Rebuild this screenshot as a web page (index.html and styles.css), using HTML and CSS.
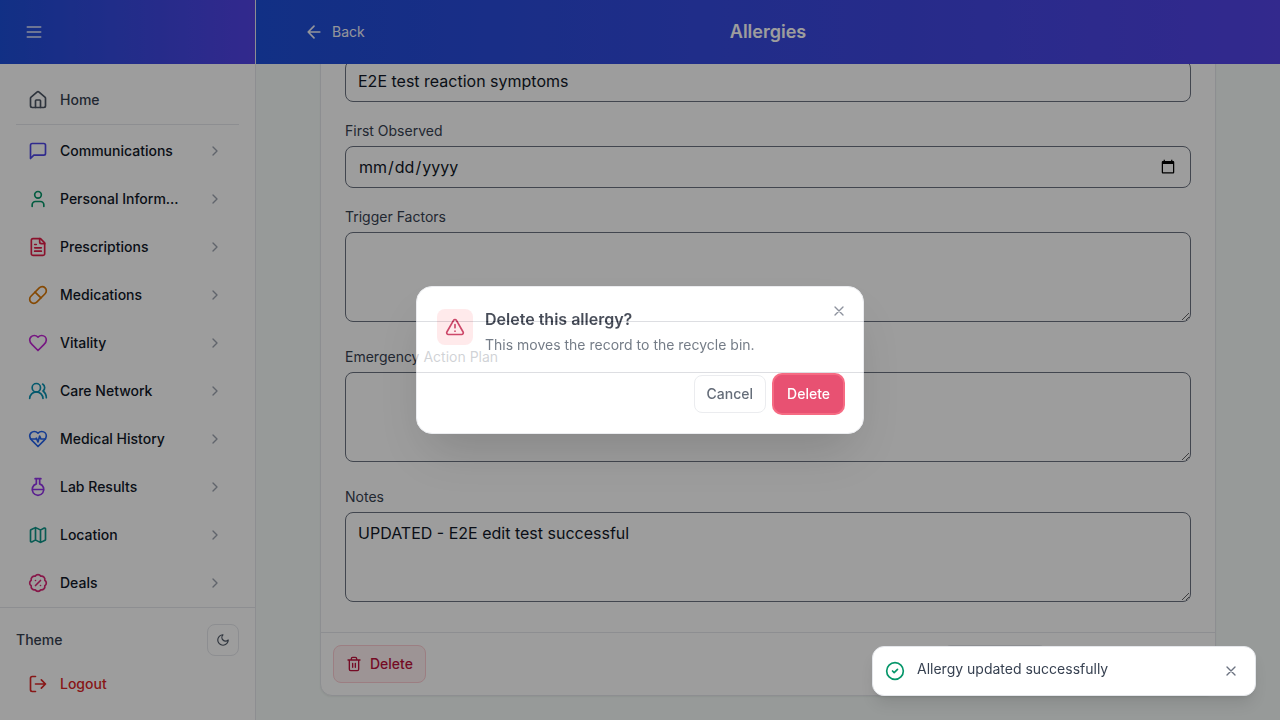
FILE: index.html
```html
<!DOCTYPE html>
<html lang="en">
<head>
<meta charset="utf-8">
<meta name="viewport" content="width=device-width, initial-scale=1">
<title>Allergies</title>
<link rel="stylesheet" href="styles.css">
</head>
<body>
<svg class="sprite" aria-hidden="true">
  <symbol id="menu" viewBox="0 0 24 24"><path d="M4 6h16M4 12h16M4 18h16"/></symbol>
  <symbol id="house" viewBox="0 0 24 24"><path d="M15 21v-8a1 1 0 0 0-1-1h-4a1 1 0 0 0-1 1v8"/><path d="M3 10a2 2 0 0 1 .709-1.528l7-6a2 2 0 0 1 2.582 0l7 6A2 2 0 0 1 21 10v9a2 2 0 0 1-2 2H5a2 2 0 0 1-2-2z"/></symbol>
  <symbol id="message" viewBox="0 0 24 24"><path d="M21 15a2 2 0 0 1-2 2H7l-4 4V5a2 2 0 0 1 2-2h14a2 2 0 0 1 2 2z"/></symbol>
  <symbol id="user" viewBox="0 0 24 24"><path d="M19 21v-2a4 4 0 0 0-4-4H9a4 4 0 0 0-4 4v2"/><circle cx="12" cy="7" r="4"/></symbol>
  <symbol id="file" viewBox="0 0 24 24"><path d="M15 2H6a2 2 0 0 0-2 2v16a2 2 0 0 0 2 2h12a2 2 0 0 0 2-2V7Z"/><path d="M14 2v4a2 2 0 0 0 2 2h4M10 9H8M16 13H8M16 17H8"/></symbol>
  <symbol id="pill" viewBox="0 0 24 24"><path d="m10.5 20.5 10-10a4.95 4.95 0 1 0-7-7l-10 10a4.95 4.95 0 1 0 7 7Z"/><path d="m8.5 8.5 7 7"/></symbol>
  <symbol id="heart" viewBox="0 0 24 24"><path d="M19 14c1.49-1.46 3-3.21 3-5.5A5.5 5.5 0 0 0 16.5 3c-1.76 0-3 .5-4.5 2-1.5-1.5-2.74-2-4.5-2A5.5 5.5 0 0 0 2 8.5c0 2.3 1.5 4.05 3 5.5l7 7Z"/></symbol>
  <symbol id="users" viewBox="0 0 24 24"><path d="M18 21a8 8 0 0 0-16 0"/><circle cx="10" cy="8" r="5"/><path d="M22 20c0-3.37-2-6.5-4-8a5 5 0 0 0-.45-8.3"/></symbol>
  <symbol id="pulse" viewBox="0 0 24 24"><path d="M19 14c1.49-1.46 3-3.21 3-5.5A5.5 5.5 0 0 0 16.5 3c-1.76 0-3 .5-4.5 2-1.5-1.5-2.74-2-4.5-2A5.5 5.5 0 0 0 2 8.5c0 2.3 1.5 4.05 3 5.5l7 7Z"/><path d="M3.22 12H9.5l.5-1 2 4.5 2-7 1.5 3.5h5.27"/></symbol>
  <symbol id="flask" viewBox="0 0 24 24"><path d="M10 2v6.292a7 7 0 1 0 4 0V2M5 15h14M8.5 2h7"/></symbol>
  <symbol id="map" viewBox="0 0 24 24"><path d="M14.106 5.553a2 2 0 0 0 1.788 0l3.659-1.83A1 1 0 0 1 21 4.619v12.764a1 1 0 0 1-.553.894l-4.553 2.277a2 2 0 0 1-1.788 0l-4.212-2.106a2 2 0 0 0-1.788 0l-3.659 1.83A1 1 0 0 1 3 19.381V6.618a1 1 0 0 1 .553-.894l4.553-2.277a2 2 0 0 1 1.788 0zM15 5.764v15M9 3.236v15"/></symbol>
  <symbol id="percent" viewBox="0 0 24 24"><path d="M3.85 8.62a4 4 0 0 1 4.78-4.77 4 4 0 0 1 6.74 0 4 4 0 0 1 4.78 4.78 4 4 0 0 1 0 6.74 4 4 0 0 1-4.77 4.78 4 4 0 0 1-6.75 0 4 4 0 0 1-4.78-4.77 4 4 0 0 1 0-6.76ZM15 9l-6 6M9 9h.01M15 15h.01"/></symbol>
  <symbol id="chevron" viewBox="0 0 24 24"><path d="m9 18 6-6-6-6"/></symbol>
  <symbol id="moon" viewBox="0 0 24 24"><path d="M12 3a6 6 0 0 0 9 9 9 9 0 1 1-9-9Z"/></symbol>
  <symbol id="logout" viewBox="0 0 24 24"><path d="m16 17 5-5-5-5M21 12H9M9 21H5a2 2 0 0 1-2-2V5a2 2 0 0 1 2-2h4"/></symbol>
  <symbol id="back" viewBox="0 0 24 24"><path d="m12 19-7-7 7-7M19 12H5"/></symbol>
  <symbol id="trash" viewBox="0 0 24 24"><path d="M3 6h18M19 6v14c0 1-1 2-2 2H7c-1 0-2-1-2-2V6M8 6V4c0-1 1-2 2-2h4c1 0 2 1 2 2v2M10 11v6M14 11v6"/></symbol>
  <symbol id="alert" viewBox="0 0 24 24"><path d="m21.73 18-8-14a2 2 0 0 0-3.48 0l-8 14A2 2 0 0 0 4 21h16a2 2 0 0 0 1.73-3M12 9v4M12 17h.01"/></symbol>
  <symbol id="check" viewBox="0 0 24 24"><circle cx="12" cy="12" r="10"/><path d="m9 12 2 2 4-4"/></symbol>
  <symbol id="close" viewBox="0 0 24 24"><path d="M18 6 6 18M6 6l12 12"/></symbol>
</svg>

<div class="app">
  <aside class="sidebar">
    <div class="sidebar-head">
      <button class="icon-button" aria-label="Toggle menu"><svg class="icon"><use href="#menu"/></svg></button>
    </div>
    <nav class="nav">
      <a class="nav-home" href="#"><svg class="icon"><use href="#house"/></svg><span>Home</span></a>
      <hr class="rule">
      <div class="nav-list">
        <button class="nav-item"><svg class="icon indigo"><use href="#message"/></svg><span class="nav-label">Communications</span><svg class="icon-sm chevron"><use href="#chevron"/></svg></button>
        <button class="nav-item"><svg class="icon emerald"><use href="#user"/></svg><span class="nav-label">Personal Information</span><svg class="icon-sm chevron"><use href="#chevron"/></svg></button>
        <button class="nav-item"><svg class="icon rose"><use href="#file"/></svg><span class="nav-label">Prescriptions</span><svg class="icon-sm chevron"><use href="#chevron"/></svg></button>
        <button class="nav-item"><svg class="icon amber"><use href="#pill"/></svg><span class="nav-label">Medications</span><svg class="icon-sm chevron"><use href="#chevron"/></svg></button>
        <button class="nav-item"><svg class="icon fuchsia"><use href="#heart"/></svg><span class="nav-label">Vitality</span><svg class="icon-sm chevron"><use href="#chevron"/></svg></button>
        <button class="nav-item"><svg class="icon cyan"><use href="#users"/></svg><span class="nav-label">Care Network</span><svg class="icon-sm chevron"><use href="#chevron"/></svg></button>
        <button class="nav-item"><svg class="icon blue"><use href="#pulse"/></svg><span class="nav-label">Medical History</span><svg class="icon-sm chevron"><use href="#chevron"/></svg></button>
        <button class="nav-item"><svg class="icon purple"><use href="#flask"/></svg><span class="nav-label">Lab Results</span><svg class="icon-sm chevron"><use href="#chevron"/></svg></button>
        <button class="nav-item"><svg class="icon teal"><use href="#map"/></svg><span class="nav-label">Location</span><svg class="icon-sm chevron"><use href="#chevron"/></svg></button>
        <button class="nav-item"><svg class="icon pink"><use href="#percent"/></svg><span class="nav-label">Deals</span><svg class="icon-sm chevron"><use href="#chevron"/></svg></button>
      </div>
    </nav>
    <div class="sidebar-foot">
      <div class="theme-row">
        <span>Theme</span>
        <button class="theme-button" aria-label="Switch to dark theme"><svg class="icon-xs"><use href="#moon"/></svg></button>
      </div>
      <button class="logout"><svg class="icon"><use href="#logout"/></svg><span>Logout</span></button>
    </div>
  </aside>

  <div class="page">
    <header class="page-head">
      <a class="back" href="#"><svg class="icon"><use href="#back"/></svg><span>Back</span></a>
      <h1 class="page-title">Allergies</h1>
    </header>
    <main class="content">
      <form class="card">
        <div class="fields">
          <div class="field"><input class="control" type="text" aria-label="Reaction" value="E2E test reaction symptoms"></div>
          <div class="field"><label for="observed">First Observed</label><input class="control" id="observed" type="date"></div>
          <div class="field"><label for="triggers">Trigger Factors</label><textarea class="control" id="triggers" rows="3"></textarea></div>
          <div class="field"><label for="plan">Emergency Action Plan</label><textarea class="control" id="plan" rows="3"></textarea></div>
          <div class="field"><label for="notes">Notes</label><textarea class="control" id="notes" rows="3">UPDATED - E2E edit test successful</textarea></div>
        </div>
        <div class="card-foot">
          <button class="button button-soft" type="button"><svg class="icon-sm"><use href="#trash"/></svg>Delete</button>
          <button class="button button-blank" type="button" aria-label="Cancel"></button>
        </div>
      </form>
    </main>
  </div>
</div>

<div class="modal-layer">
  <section class="dialog" role="alertdialog" aria-labelledby="dialog-title" aria-describedby="dialog-text">
    <div class="dialog-top">
      <div class="badge"><svg class="icon"><use href="#alert"/></svg></div>
      <div class="dialog-copy">
        <h2 class="dialog-title" id="dialog-title">Delete this allergy?</h2>
        <p class="dialog-text" id="dialog-text">This moves the record to the recycle bin.</p>
      </div>
      <button class="close dialog-close" aria-label="Close"><svg class="icon-sm"><use href="#close"/></svg></button>
    </div>
    <div class="dialog-actions">
      <button class="button">Cancel</button>
      <button class="button button-danger">Delete</button>
    </div>
  </section>
</div>

<div class="toast" role="status">
  <svg class="icon toast-icon"><use href="#check"/></svg>
  <span class="toast-text">Allergy updated successfully</span>
  <button class="close" aria-label="Dismiss"><svg class="icon-sm"><use href="#close"/></svg></button>
</div>
</body>
</html>
```

FILE: styles.css
```css
* { box-sizing: border-box; }

body {
  margin: 0;
  font: 14px/20px Inter, "Liberation Sans", sans-serif;
  color: #374151;
  background: #f5fbf8;
}

button, input, textarea { font: inherit; color: inherit; margin: 0; }
button { padding: 0; border: 0; background: none; }
a { color: inherit; text-decoration: none; }
h1, h2, p { margin: 0; }

.sprite { position: absolute; width: 0; height: 0; }
.icon, .icon-sm, .icon-xs {
  flex: none;
  display: block;
  fill: none;
  stroke: currentColor;
  stroke-width: 2;
  stroke-linecap: round;
  stroke-linejoin: round;
}
.icon { width: 20px; height: 20px; }
.icon-sm { width: 16px; height: 16px; }
.icon-xs { width: 14px; height: 14px; }

.app { display: flex; height: 100vh; overflow: hidden; }

.sidebar {
  flex: none;
  width: 256px;
  display: flex;
  flex-direction: column;
  background: #fff;
  border-right: 1px solid #e5e7eb;
  font-weight: 500;
}
.sidebar-head, .page-head {
  flex: none;
  height: 64px;
  display: flex;
  align-items: center;
  color: #fff;
  background: linear-gradient(to right, #1d4ed8, #5343e6);
}
.sidebar-head { padding: 0 24px; }
.icon-button { color: #e0e4f8; }
.nav { flex: 1; min-height: 0; overflow: hidden; padding: 16px 16px 0; }
.nav-home { display: flex; align-items: center; gap: 12px; height: 40px; padding: 0 12px; }
.nav-home .icon { color: #4b5563; }
.rule { margin: 4px 0; border: 0; border-top: 1px solid #e5e7eb; }
.nav-list { display: grid; gap: 4px; }
.nav-item {
  display: flex;
  align-items: center;
  gap: 12px;
  min-width: 0;
  height: 44px;
  padding: 0 16px 0 12px;
  font-weight: 500;
  color: #111827;
  text-align: left;
}
.nav-label { flex: 1; min-width: 0; margin-right: 12px; overflow: hidden; white-space: nowrap; text-overflow: ellipsis; }
.chevron { color: #9ca3af; }
.indigo { color: #4f46e5; }
.emerald { color: #059669; }
.rose { color: #e11d48; }
.amber { color: #d97706; }
.fuchsia { color: #c026d3; }
.cyan { color: #0891b2; }
.blue { color: #2563eb; }
.purple { color: #9333ea; }
.teal { color: #0d9488; }
.pink { color: #db2777; }

.sidebar-foot { display: grid; gap: 8px; padding: 16px; border-top: 1px solid #e5e7eb; }
.theme-row { display: flex; align-items: center; justify-content: space-between; }
.theme-button {
  display: grid;
  place-items: center;
  width: 32px;
  height: 32px;
  border: 1px solid #e5e7eb;
  border-radius: 8px;
  color: #4b5563;
}
.logout { display: flex; align-items: center; gap: 12px; height: 40px; padding: 0 12px; font-weight: 500; color: #dc2626; }

.page { flex: 1; min-width: 0; display: flex; flex-direction: column; }
.page-head { display: grid; grid-template-columns: 1fr auto 1fr; padding: 0 48px; }
.back { display: flex; align-items: center; gap: 8px; color: #f0f2fb; }
.page-title { font-size: 18px; line-height: 28px; font-weight: 600; }

.content {
  flex: 1;
  min-height: 0;
  overflow: hidden;
  display: flex;
  flex-direction: column;
  justify-content: flex-end;
  padding: 0 64px 24px;
}
.card {
  flex: none;
  background: #fff;
  border: 1px solid #e5e7eb;
  border-radius: 12px;
  box-shadow: 0 1px 2px rgba(0, 0, 0, 0.06);
}
.fields { display: grid; gap: 20px; padding: 24px; }
.field { display: grid; gap: 6px; line-height: 18px; }
.control {
  display: block;
  width: 100%;
  padding: 8px 12px;
  border: 1px solid #6b7280;
  border-radius: 8px;
  background: #fff;
  font-size: 16px;
  line-height: 24px;
  color: #111827;
}
input.control { height: 42px; }
textarea.control { margin-bottom: 6px; resize: vertical; }
.card-foot { display: flex; justify-content: space-between; padding: 12px; border-top: 1px solid #e5e7eb; }

.button {
  display: flex;
  align-items: center;
  justify-content: center;
  gap: 8px;
  min-height: 38px;
  padding: 0 12px;
  border: 1px solid #e5e7eb;
  border-radius: 8px;
  font-weight: 500;
}
.button-soft { color: #be123c; background: #fff1f2; border-color: #fecdd3; }
.button-blank { width: 104px; margin-right: 156px; }
.button-danger { color: #fff; background: #e11d48; border-color: #e11d48; box-shadow: 0 0 0 2px #f43f5e; }

.modal-layer { position: fixed; inset: 0; display: grid; place-items: center; overflow: hidden; }
/* The spread shadow is the backdrop, so it fades together with the dialog. */
.dialog {
  width: 448px;
  max-width: 100%;
  padding: 20px;
  border: 1px solid #e5e7eb;
  border-radius: 16px;
  background: #fff;
  opacity: 0.77;
  box-shadow: 0 25px 50px -12px rgba(0, 0, 0, 0.25), 0 0 0 200vmax rgba(0, 0, 0, 0.5);
}
.dialog-top { display: flex; align-items: flex-start; gap: 12px; }
.badge {
  display: grid;
  place-items: center;
  width: 36px;
  height: 36px;
  margin-top: 2px;
  border-radius: 8px;
  color: #be123c;
  background: #ffe4e6;
}
.dialog-copy { flex: 1; display: grid; gap: 4px; }
.dialog-title { font-size: 16px; line-height: 24px; font-weight: 600; color: #111827; }
.dialog-text { color: #4b5563; }
.close { flex: none; display: grid; place-items: center; width: 24px; height: 24px; color: #6b7280; }
.dialog-close { margin: -8px -8px 0 0; }
.dialog-actions { display: flex; justify-content: flex-end; gap: 8px; margin-top: 20px; }

.toast {
  position: fixed;
  right: 24px;
  bottom: 24px;
  display: flex;
  align-items: flex-start;
  gap: 12px;
  width: 384px;
  padding: 12px;
  border: 1px solid #e5e7eb;
  border-radius: 12px;
  background: #fff;
  box-shadow: 0 10px 15px -3px rgba(0, 0, 0, 0.1), 0 4px 6px -4px rgba(0, 0, 0, 0.1);
}
.toast-icon { margin-top: 2px; color: #059669; }
.toast-text { flex: 1; }
```
